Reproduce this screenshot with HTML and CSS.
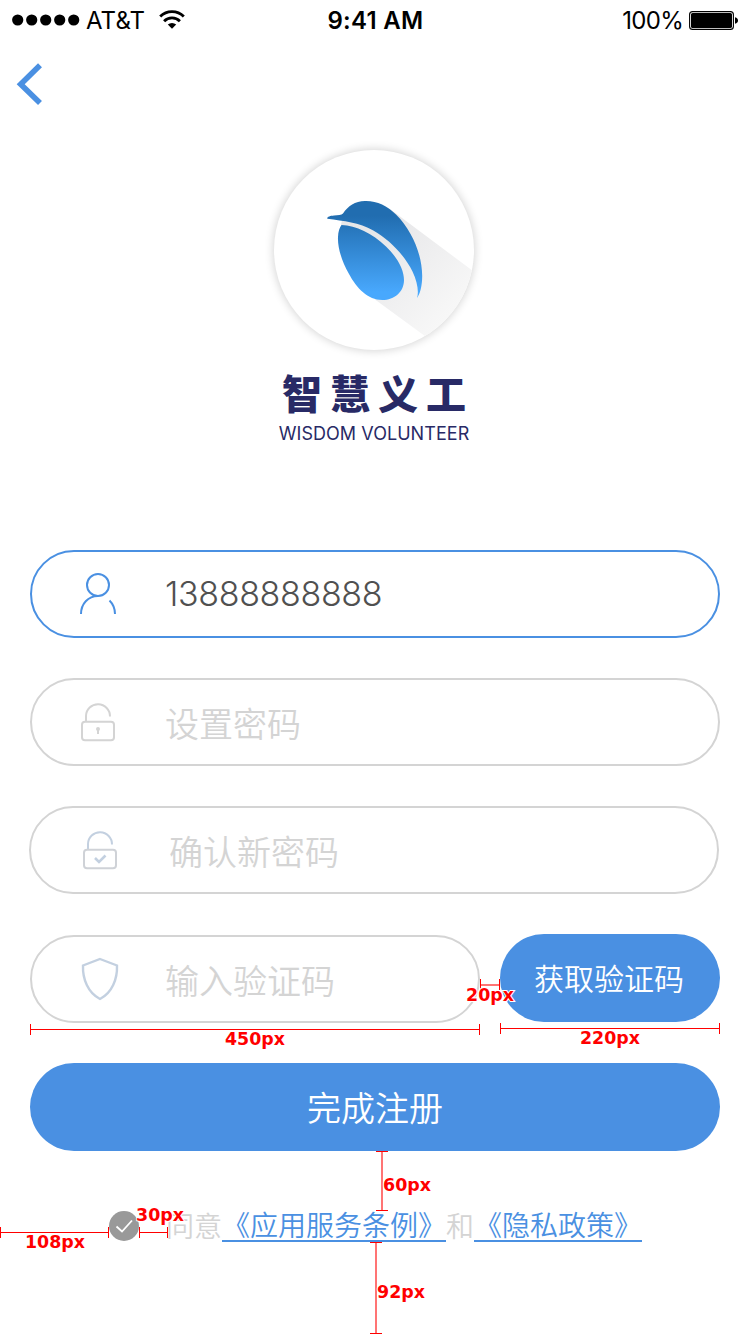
FILE: index.html
```html
<!DOCTYPE html>
<html lang="zh-CN">
<head>
<meta charset="utf-8">
<title>智慧义工</title>
<link rel="stylesheet" href="styles.css">
</head>
<body>
<main class="screen">
  <header class="status">
    <div class="status-left">
      <svg class="signal" width="68" height="12" viewBox="0 0 68 12"><circle cx="5.7" cy="6" r="5.6"/><circle cx="19.7" cy="6" r="5.6"/><circle cx="33.7" cy="6" r="5.6"/><circle cx="47.7" cy="6" r="5.6"/><circle cx="61.7" cy="6" r="5.6"/></svg>
      <span class="carrier">AT&amp;T</span>
      <svg class="wifi" width="26" height="19" viewBox="0 0 26 19"><g fill="none" stroke="#000" stroke-width="2.8"><path d="M1.200 6.600A16.500 16.500 0 0 1 24.800 6.600"/><path d="M5.100 11.200A11 11 0 0 1 20.900 11.200"/></g><path d="M8.800 14.600A6 6 0 0 1 17.200 14.600L13 18.800Z"/></svg>
    </div>
    <div class="clock">9:41 AM</div>
    <div class="status-right">
      <span class="percent">100%</span>
      <svg width="50" height="19" viewBox="0 0 50 19"><rect x=".6" y=".6" width="43.8" height="17.8" rx="3" fill="none" stroke="#000" stroke-width="1.1"/><rect x="2" y="2" width="41" height="15" rx="1.6"/><path d="M46 6.2Q49 7 49 9.5T46 12.8Z"/></svg>
    </div>
  </header>

  <nav class="nav">
    <svg width="27" height="44" viewBox="0 0 27 44"><path d="M24 3.200L4.700 22.200L24 41" fill="none" stroke="#4a90e2" stroke-width="5.6"/></svg>
  </nav>

  <section class="brand">
    <div class="logo">
      <svg width="200" height="200" viewBox="0 0 200 200">
        <defs>
          <linearGradient id="blue" gradientUnits="userSpaceOnUse" x1="0" y1="51" x2="0" y2="150"><stop offset=".15" stop-color="#216db0"/><stop offset=".92" stop-color="#48a8fd"/></linearGradient>
          <linearGradient id="shade" gradientUnits="userSpaceOnUse" x1="100" y1="90" x2="176" y2="162"><stop offset="0" stop-color="#e7e7e9"/><stop offset="1" stop-color="#f7f7f7"/></linearGradient>
          <clipPath id="disc"><circle cx="100" cy="100" r="100"/></clipPath>
        </defs>
        <path clip-path="url(#disc)" fill="url(#shade)" d="M67 75L68 70L116 59L119 61.2L215 133L170 200L101 149.5L100 90Z"/>
        <path fill="url(#blue)" d="M53.3 68.8C52.8 66.8 56 65.8 60 65.5C64 65.2 67.5 65 69 63.5C74 56 81 51 91 51C103 50.7 113 55.5 122 64.5C138 80.5 148 104 148.2 126C148.2 136 146 144 143 148C145 142 143.500 132 138.500 121.500C131 106 116 90 99.300 80.500C85 72.500 70 71 53.300 68.800Z"/>
        <path fill="url(#blue)" d="M67.500 75C82 75.500 98 83 112 96.500C124 108 130 120 130 130C130 142 120.500 150 108.300 150C94 150 82.500 138 75 124C67.500 111 63.500 97 64 87C64.200 81.500 65.500 77.500 67.500 75Z"/>
      </svg>
    </div>
    <h1 class="name">智慧义工</h1>
    <p class="latin">WISDOM VOLUNTEER</p>
  </section>

  <form class="form">
    <div class="field active">
      <svg class="icon" width="40" height="44" viewBox="0 0 40 44"><circle cx="20" cy="13" r="11"/><path d="M3 42C3 32 10 24 20 24M31.500 28.500C35 32 37 36 37 42"/></svg>
      <span class="value">13888888888</span>
    </div>
    <div class="field">
      <svg class="icon" width="40" height="44" viewBox="0 0 40 44"><rect x="4" y="21.700" width="32" height="18.500" rx="3"/><path d="M8 21V16A12 12 0 0 1 32 16.500M20 29V34"/><circle cx="20" cy="29" r="1"/></svg>
      <span class="hint">设置密码</span>
    </div>
    <div class="field confirm">
      <svg class="icon cool" width="40" height="44" viewBox="0 0 40 44"><path d="M8 21V16A12 12 0 0 1 32 16.500"/><path stroke-width="2.600" d="M15 30L19 34L25.500 27.500"/><rect class="case" x="4" y="21.700" width="32" height="18.500" rx="3"/></svg>
      <span class="hint">确认新密码</span>
    </div>
    <div class="code-row">
      <div class="field code">
        <svg class="icon cool shield" width="40" height="44" viewBox="0 0 40 44"><path d="M20 2L37 8.500C37.500 22 32 36 20 42C8 36 2.500 22 3 8.500Z"/></svg>
        <span class="hint">输入验证码</span>
      </div>
      <button class="send" type="button">获取验证码</button>
    </div>
    <button class="submit" type="button">完成注册</button>
  </form>

  <footer class="agreement">
    <svg class="check" width="30" height="30" viewBox="0 0 30 30"><circle cx="15" cy="15" r="15" fill="#999"/><path d="M7.500 15.500L13 20.500L23 9.500" fill="none" stroke="#fff" stroke-width="1.800"/></svg>
    <span class="plain">同意</span><a class="link">《应用服务条例》</a><span class="plain">和</span><a class="link">《隐私政策》</a>
  </footer>

  <svg class="measures" width="750" height="1334" viewBox="0 0 750 1334">
    <g class="rule">
      <path d="M30.500 1029.500H479.500M30.500 1024V1035M479.500 1024V1035"/>
      <path d="M500.500 1028.500H719.500M500.500 1023V1034M719.500 1023V1034"/>
      <path d="M480.500 979V990M499.500 979V990"/>
      <path d="M.5 1232.500H108.500M.5 1227V1238M108.500 1227V1238M139.500 1232.500H167.500M139.500 1227V1238M167.500 1227V1238"/>
      <path d="M376 1151.500H388M376 1210.500H388M370 1242.500H382M370 1333.500H382"/>
    </g>
    <g class="soft"><path d="M481 985H499M382 1152V1210M376 1243V1333"/></g>
    <g class="label">
      <text x="225" y="1045" textLength="60" lengthAdjust="spacingAndGlyphs">450px</text>
      <text x="580" y="1044" textLength="60" lengthAdjust="spacingAndGlyphs">220px</text>
      <text x="466" y="1001" textLength="48" lengthAdjust="spacingAndGlyphs">20px</text>
      <text x="25" y="1248" textLength="60" lengthAdjust="spacingAndGlyphs">108px</text>
      <text x="136" y="1221" textLength="48" lengthAdjust="spacingAndGlyphs">30px</text>
      <text x="383" y="1191" textLength="48" lengthAdjust="spacingAndGlyphs">60px</text>
      <text x="377" y="1298" textLength="48" lengthAdjust="spacingAndGlyphs">92px</text>
    </g>
  </svg>
</main>
</body>
</html>
```
FILE: styles.css
```css
* { box-sizing: border-box; }

body {
  margin: 0;
  background: #fff;
  font-family: Inter, "Noto Sans CJK SC", sans-serif;
}

.screen {
  position: relative;
  width: 750px;
  height: 1334px;
  overflow: hidden;
}

.status {
  display: grid;
  grid-template-columns: 1fr auto 1fr;
  align-items: center;
  height: 40px;
  padding: 0 11px 0 12px;
  color: #000;
  font-size: 24px;
  line-height: 38px;
}

.status-left,
.status-right {
  display: flex;
  align-items: center;
}

.status-right {
  justify-content: flex-end;
  gap: 6px;
}

.carrier { margin: 2px 14px 0 6px; letter-spacing: 0.1px; }
.wifi { margin-top: -1px; }
.clock { padding-top: 2px; font-weight: 600; letter-spacing: 0.3px; }
.percent { padding-top: 2px; letter-spacing: -0.7px; }

.nav {
  height: 110px;
  padding: 22px 0 0 16px;
}

.nav svg { display: block; }

.brand {
  display: flex;
  flex-direction: column;
  align-items: center;
  height: 400px;
  padding-right: 2px;
  color: #282a66;
}

.logo {
  width: 200px;
  height: 200px;
  border-radius: 50%;
  background: #fff;
  box-shadow: 0 0 8px 1px rgba(0, 0, 0, 0.17);
}

.logo svg { display: block; }

.name {
  margin: 18px 0 0 8px;
  font: 900 40px/48px "Noto Sans CJK SC", sans-serif;
  letter-spacing: 8px;
}

.latin {
  margin: 6px 0 0;
  font: 18px/24px Inter, Arial, sans-serif;
  letter-spacing: 0.05px;
  white-space: nowrap;
}

.form {
  display: flex;
  flex-direction: column;
  gap: 40px;
  padding: 0 30px;
}

.field {
  display: flex;
  align-items: center;
  height: 88px;
  padding-left: 46px;
  border: 2px solid #d4d4d4;
  border-radius: 44px;
  color: #d4d4d4;
  font-size: 34px;
  font-weight: 300;
  line-height: 50px;
}

.icon {
  flex: none;
  margin-right: 47px;
  fill: none;
  stroke: currentColor;
  stroke-width: 2;
}

.active { border-color: #4a90e2; color: #4a90e2; }
.value { color: #505050; letter-spacing: -0.35px; }

.hint {
  padding-top: 2px;
  font-family: "Noto Sans CJK SC DemiLight", "Noto Sans CJK SC", sans-serif;
  font-weight: 350;
}

.confirm { width: 690px; margin-left: -1px; padding-left: 49px; }
.confirm .icon { margin-right: 49px; }
.cool { stroke: #c3d0e0; }
.case { stroke: #cfd2d7; }
.shield { margin: 0 45px 0 2px; stroke-width: 2.4; }

.code-row {
  display: flex;
  align-items: flex-start;
  gap: 20px;
}

.code { width: 450px; margin-top: 1px; }

.send,
.submit {
  height: 88px;
  padding: 0 0 2px;
  border: 0;
  border-radius: 44px;
  background: #4a90e2;
  color: #fff;
  font-family: "Noto Sans CJK SC DemiLight", "Noto Sans CJK SC", sans-serif;
  font-weight: 350;
}

.send { width: 220px; padding-right: 2px; font-size: 30px; }
.submit { width: 690px; font-size: 34px; }

.agreement {
  display: flex;
  align-items: center;
  height: 30px;
  margin-top: 60px;
  padding-left: 109px;
  font: 350 28px/28px "Noto Sans CJK SC DemiLight", "Noto Sans CJK SC", sans-serif;
}

.check { margin-right: 27px; }
.plain { padding-bottom: 3px; color: #d4d4d4; }

.link {
  height: 31px;
  border-bottom: 2px solid #4a90e2;
  color: #4a90e2;
  line-height: 27px;
}

/* spacing annotations drawn over the screen */
.measures { position: absolute; inset: 0; }
.rule { fill: none; stroke: #f00; stroke-width: 1; }
.soft { fill: none; stroke: #ff7474; stroke-width: 2; }

.label {
  fill: #f00;
  stroke: #fff;
  stroke-width: 2px;
  paint-order: stroke;
  font: bold 18.5px "DejaVu Sans", Verdana, sans-serif;
}
```
